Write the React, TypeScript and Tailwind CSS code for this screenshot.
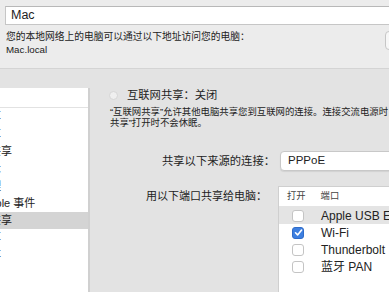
import React from "react";

const FONT = { fontFamily: '"Liberation Sans", "Noto Sans CJK SC", sans-serif' };

function Check({ checked }: { checked?: boolean }) {
  if (checked) {
    return (
      <div className="w-[12px] h-[12px] rounded-[3px] bg-[#3d7fe0] border border-[#2f6cc9] flex items-center justify-center">
        <svg width="9" height="9" viewBox="0 0 9 9">
          <path d="M1.5 4.8 L3.6 6.9 L7.6 2" stroke="white" strokeWidth="1.6" fill="none" strokeLinecap="round" strokeLinejoin="round" />
        </svg>
      </div>
    );
  }
  return <div className="w-[12px] h-[12px] rounded-[3px] bg-white border border-[#c4c4c4]" />;
}

export default function App() {
  const services = [
    "屏幕共享",
    "文件共享",
    "打印机共享",
    "远程登录",
    "远程管理",
    "远程 Apple 事件",
    "互联网共享",
    "蓝牙共享",
    "内容缓存",
  ];
  const ports = [
    { name: "Apple USB Ethernet", checked: false, sel: true },
    { name: "Wi-Fi", checked: true },
    { name: "Thunderbolt  网桥", checked: false },
    { name: "蓝牙 PAN", checked: false },
  ];
  return (
    <div className="w-[389px] h-[292px] overflow-hidden bg-[#e3e3e3] text-[#222] flex flex-col" style={FONT}>
      {/* top */}
      <div className="h-[69px] shrink-0 bg-[#ececec] border-b border-[#d4d4d4] flex flex-col">
        <div className="mt-[6px] ml-[5px] w-[420px] h-[19px] bg-white border border-[#c6c6c6] border-t-[#b8b8b8] flex items-center pl-[5px] text-[12.5px]">
          Mac
        </div>
        <div className="flex items-start justify-between mt-[5px]">
          <div className="ml-[6px] text-[9.75px] leading-[13px] whitespace-nowrap">
            <div>您的本地网络上的电脑可以通过以下地址访问您的电脑：</div>
            <div>Mac.local</div>
          </div>
          <div className="mt-[1px] mr-[-16px] w-[20px] h-[19px] rounded-[4px] bg-[#f7f7f7] border border-[#c6c6c6] shrink-0" />
        </div>
      </div>
      {/* bottom */}
      <div className="flex flex-1 min-h-0">
        <div className="w-[90px] shrink-0 pt-[19px] flex">
          <div className="flex-1 bg-white border-r-2 border-[#d0d0d0] overflow-hidden">
            <div className="h-[20px] border-b border-[#e2e2e2]" />
            {services.map((s, i) => (
              <div
                key={s}
                className={`h-[17.3px] flex items-center whitespace-nowrap text-[11px] ${i === 6 ? "bg-[#d4d4d4]" : ""}`}
              >
                <span className="ml-[-43px]">{s}</span>
              </div>
            ))}
          </div>
        </div>
        <div className="flex-1 min-w-0 overflow-hidden flex flex-col">
          <div className="mt-[19px] ml-[19px] h-[14px] flex items-center whitespace-nowrap">
            <div className="w-[9px] h-[9px] rounded-full border border-[#d6d6d6] bg-[#efefef]" />
            <span className="ml-[9px] text-[11.3px]">互联网共享：关闭</span>
          </div>
          <div className="mt-[5px] ml-[20px] text-[9.4px] leading-[10.5px] whitespace-nowrap">
            <div>“互联网共享”允许其他电脑共享您到互联网的连接。连接交流电源时，电脑在“互联网</div>
            <div>共享”打开时不会休眠。</div>
          </div>
          <div className="mt-[23px] flex items-center whitespace-nowrap">
            <div className="w-[185px] shrink-0 text-right text-[11.3px]">共享以下来源的连接：</div>
            <div className="ml-[5px] w-[140px] shrink-0 h-[20px] bg-white rounded-[4px] border border-[#c8c8c8] shadow-[0_1px_1px_rgba(0,0,0,0.08)] flex items-center pl-[7px] text-[11.5px]">
              PPPoE
            </div>
          </div>
          <div className="mt-[15px] flex items-start whitespace-nowrap flex-1">
            <div className="w-[177px] shrink-0 h-[20px] flex items-center justify-end text-[11px]">用以下端口共享给电脑：</div>
            <div className="ml-[11px] w-[140px] shrink-0 h-[120px] bg-white border border-[#cfcfcf]">
              <div className="h-[20px] flex items-center text-[9.3px] text-[#444] border-b border-[#e4e4e4]">
                <span className="ml-[8px]">打开</span>
                <span className="ml-[15px]">端口</span>
              </div>
              {ports.map((p) => (
                <div key={p.name} className={`h-[17px] flex items-center text-[12px] ${p.sel ? "bg-[#e4e4e4]" : ""}`}>
                  <div className="ml-[13px]">
                    <Check checked={p.checked} />
                  </div>
                  <span className="ml-[17px] whitespace-pre">{p.name}</span>
                </div>
              ))}
            </div>
          </div>
        </div>
      </div>
    </div>
  );
}
